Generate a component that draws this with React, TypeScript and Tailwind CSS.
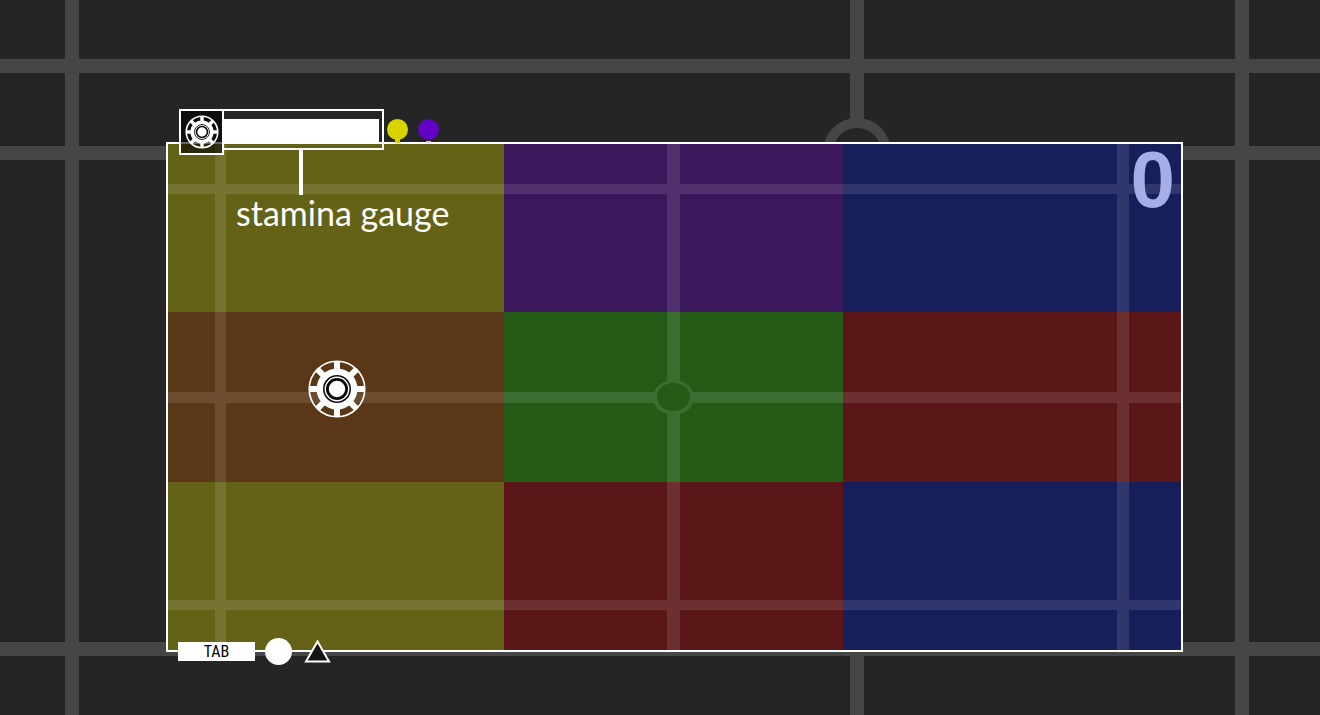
function Gear({ className, bold = false }: { className: string; bold?: boolean }) {
  return (
    <svg viewBox="-30 -30 60 60" className={className} aria-hidden="true">
      <circle r="27.8" fill="none" stroke="#fff" strokeWidth={bold ? 2.8 : 1.6} />
      {[0, 45, 90, 135].map((angle) => (
        <rect key={angle} x="-28" y="-3" width="56" height="6" fill="#fff" transform={`rotate(${angle})`} />
      ))}
      <circle r="20.5" fill="#fff" />
      <circle r="13.2" fill="none" stroke="#111" strokeWidth="1.6" />
      <circle r="9.6" fill="none" stroke="#080808" strokeWidth="2.8" />
    </svg>
  );
}

const tiles = [
  "bg-[#646216]", "bg-[#3b175b]", "bg-[#171f5b]",
  "bg-[#5a3817]", "bg-[#235b17]", "bg-[#5b1717]",
  "bg-[#646216]", "bg-[#5b1717]", "bg-[#171f5b]",
];

function Backdrop() {
  return (
    <svg className="absolute inset-0 h-full w-full" viewBox="0 0 1320 715" preserveAspectRatio="none" aria-hidden="true">
      <path d="M72 0V715M1242 0V715M857 0V119M857 650V715M0 66H1320M0 153H167M1181 153H1320M0 649H1320" fill="none" stroke="#464646" strokeWidth="14" />
      <circle cx="857" cy="152" r="29" fill="none" stroke="#464646" strokeWidth="10" />
    </svg>
  );
}

function BoardLines() {
  return (
    <svg className="absolute inset-0 h-full w-full" viewBox="0 0 1013 506" preserveAspectRatio="none" aria-hidden="true">
      <path
        d="M47 0H58V40H499V0H512V40H949V0H961V40H1013V50H961V248H1013V259H961V456H1013V466H961V506H949V466H512V506H499V466H58V506H47V466H0V456H47V259H0V248H47V50H0V40H47ZM58 50V248H486A20 17 0 0 1 499 237V50ZM512 50V237A20 17 0 0 1 525 248H949V50ZM58 259V456H499V270A20 17 0 0 1 486 259ZM525 259A20 17 0 0 1 512 270V456H949V259ZM489 253A16.5 14 0 1 0 522 253A16.5 14 0 1 0 489 253Z"
        fill="#fff" fillOpacity="0.11" fillRule="evenodd"
      />
    </svg>
  );
}

export default function App() {
  return (
    <main className="relative min-h-screen overflow-hidden bg-[#252525] pt-[142px] pr-[137px] pb-[63px] pl-[166px] font-['Lato',sans-serif] text-white">
      <Backdrop />
      <section aria-label="Game board" className="relative aspect-[1017/510] w-full border-2 border-white">
        <div className="grid h-full grid-cols-[336fr_339fr_338fr] grid-rows-[168fr_170fr_168fr]">
          {tiles.map((color, index) => (
            <div key={index} className={color} />
          ))}
        </div>
        <BoardLines />

        <header className="absolute top-[-35px] left-[11px] flex items-start">
          <div className="flex h-[46px] w-[45px] items-center justify-center border-2 border-white bg-black/60">
            <Gear bold className="h-[34px] w-[34px]" />
          </div>
          <div className="-ml-0.5">
            <div id="stamina" role="meter" aria-labelledby="stamina-label" aria-valuemin={0} aria-valuemax={100} aria-valuenow={100} className="h-[41px] w-[162px] border-2 border-white pt-2 pr-[3px]">
              <div className="h-6 bg-white" />
            </div>
            <div className="ml-[77px] h-[45px] w-1 bg-white" />
            <p id="stamina-label" className="ml-3.5 text-[34px] leading-9 whitespace-nowrap">stamina gauge</p>
          </div>
        </header>
        <svg className="absolute top-[-27px] left-[218px] h-[26px] w-14" viewBox="0 0 56 26" aria-hidden="true">
          <path d="M9 20H14V26H9Z" fill="#d9d400" />
          <circle cx="11.5" cy="12.5" r="10.5" fill="#d9d400" />
          <circle cx="42.5" cy="12.5" r="10.5" fill="#6200c4" />
          <path d="M40 24H45V26H40Z" fill="#d9c8f2" />
        </svg>

        <output aria-label="Score" className="absolute top-[-12px] right-[6px] font-['Liberation_Sans',sans-serif] text-[80px] leading-[96px] font-bold text-[#a6aee8]">0</output>

        <Gear className="absolute top-[215px] left-[139px] h-[60px] w-[60px]" />

        <nav aria-label="Controls" className="absolute bottom-[-15px] left-[10px] flex items-center">
          <button className="h-[19px] w-[77px] bg-white font-['Liberation_Sans_Narrow','Roboto_Condensed','Open_Sans_Condensed','Liberation_Sans',sans-serif] text-[16px] leading-[19px] text-black">TAB</button>
          <button aria-label="Circle" className="ml-2.5 h-[27px] w-[27px] rounded-full bg-white" />
          <button aria-label="Triangle" className="ml-3 h-[25px] w-[27px]">
            <svg viewBox="0 0 27 25" className="h-full w-full" aria-hidden="true">
              <path d="M13.5 2.5L25 22.5H2Z" fill="#151515" stroke="#fff" strokeWidth="2" />
            </svg>
          </button>
        </nav>
      </section>
    </main>
  );
}
